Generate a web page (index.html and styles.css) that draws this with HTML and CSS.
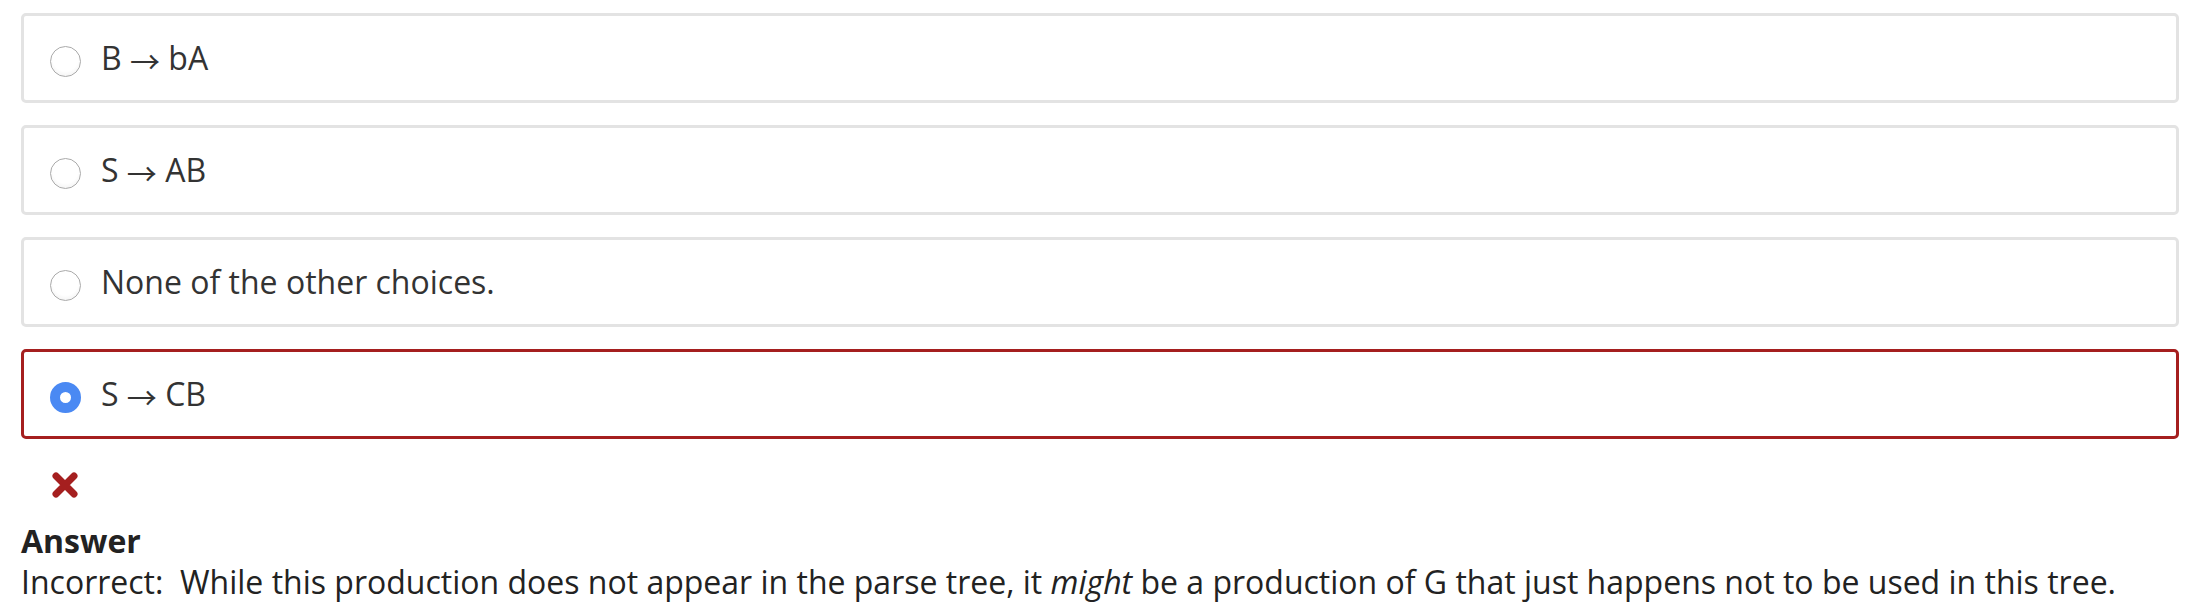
FILE: index.html
```html
<!DOCTYPE html>
<html>
<head>
<meta charset="utf-8">
<link rel="stylesheet" href="styles.css">
</head>
<body>
<div class="page">
  <div class="choices">
    <label class="choice"><span class="radio"></span><span class="text">B <span class="arr">→</span> bA</span></label>
    <label class="choice"><span class="radio"></span><span class="text">S <span class="arr">→</span> AB</span></label>
    <label class="choice"><span class="radio"></span><span class="text">None of the other choices.</span></label>
    <label class="choice wrong"><span class="radio checked"></span><span class="text">S <span class="arr">→</span> CB</span></label>
  </div>
  <div class="mark">
    <svg width="26" height="26" viewBox="0 0 26 26"><path d="M4 4 L22 22 M22 4 L4 22" stroke="#a51f1f" stroke-width="7" stroke-linecap="round" fill="none"/></svg>
  </div>
  <div class="answer">
    <div class="answer-title">Answer</div>
    <div class="answer-text">Incorrect:&nbsp; While this production does not appear in the parse tree, it <em>might</em> be a production of G that just happens not to be used in this tree.</div>
  </div>
</div>
</body>
</html>
```

FILE: styles.css
```css
html, body {
  margin: 0;
  padding: 0;
  background: #fff;
}
.page {
  padding: 13px 17px 0 21px;
  font-family: "Open Sans", "Noto Sans", sans-serif;
  font-size: 32px;
  color: #333;
}
.choices {
  display: flex;
  flex-direction: column;
  gap: 22px;
}
.choice {
  display: flex;
  align-items: center;
  height: 90px;
  box-sizing: border-box;
  border: 3px solid #e3e3e3;
  border-radius: 5px;
  padding: 0 26px;
  background: #fff;
}
.choice.wrong {
  border: 3px solid #a51f1f;
}
.radio {
  width: 31px;
  height: 31px;
  box-sizing: border-box;
  border-radius: 50%;
  border: 1px solid #aaaaaa;
  background: radial-gradient(circle at 50% 40%, #ffffff 55%, #ebebeb 100%);
  margin-top: 7px;
  margin-right: 20px;
  flex: none;
}
.radio.checked {
  border: 10px solid #4a89f3;
  background: #fff;
}
.text {
  line-height: 1;
}
.arr {
  font-family: "Noto Sans CJK JP", sans-serif;
  font-size: 30px;
  vertical-align: -3px;
}
.mark {
  display: flex;
  padding-left: 31px;
  margin-top: 33px;
  height: 26px;
}
.answer {
  margin-top: 22px;
  line-height: 41px;
}
.answer-title {
  font-weight: 700;
  color: #222;
}
.answer-text {
  color: #222;
}
```
